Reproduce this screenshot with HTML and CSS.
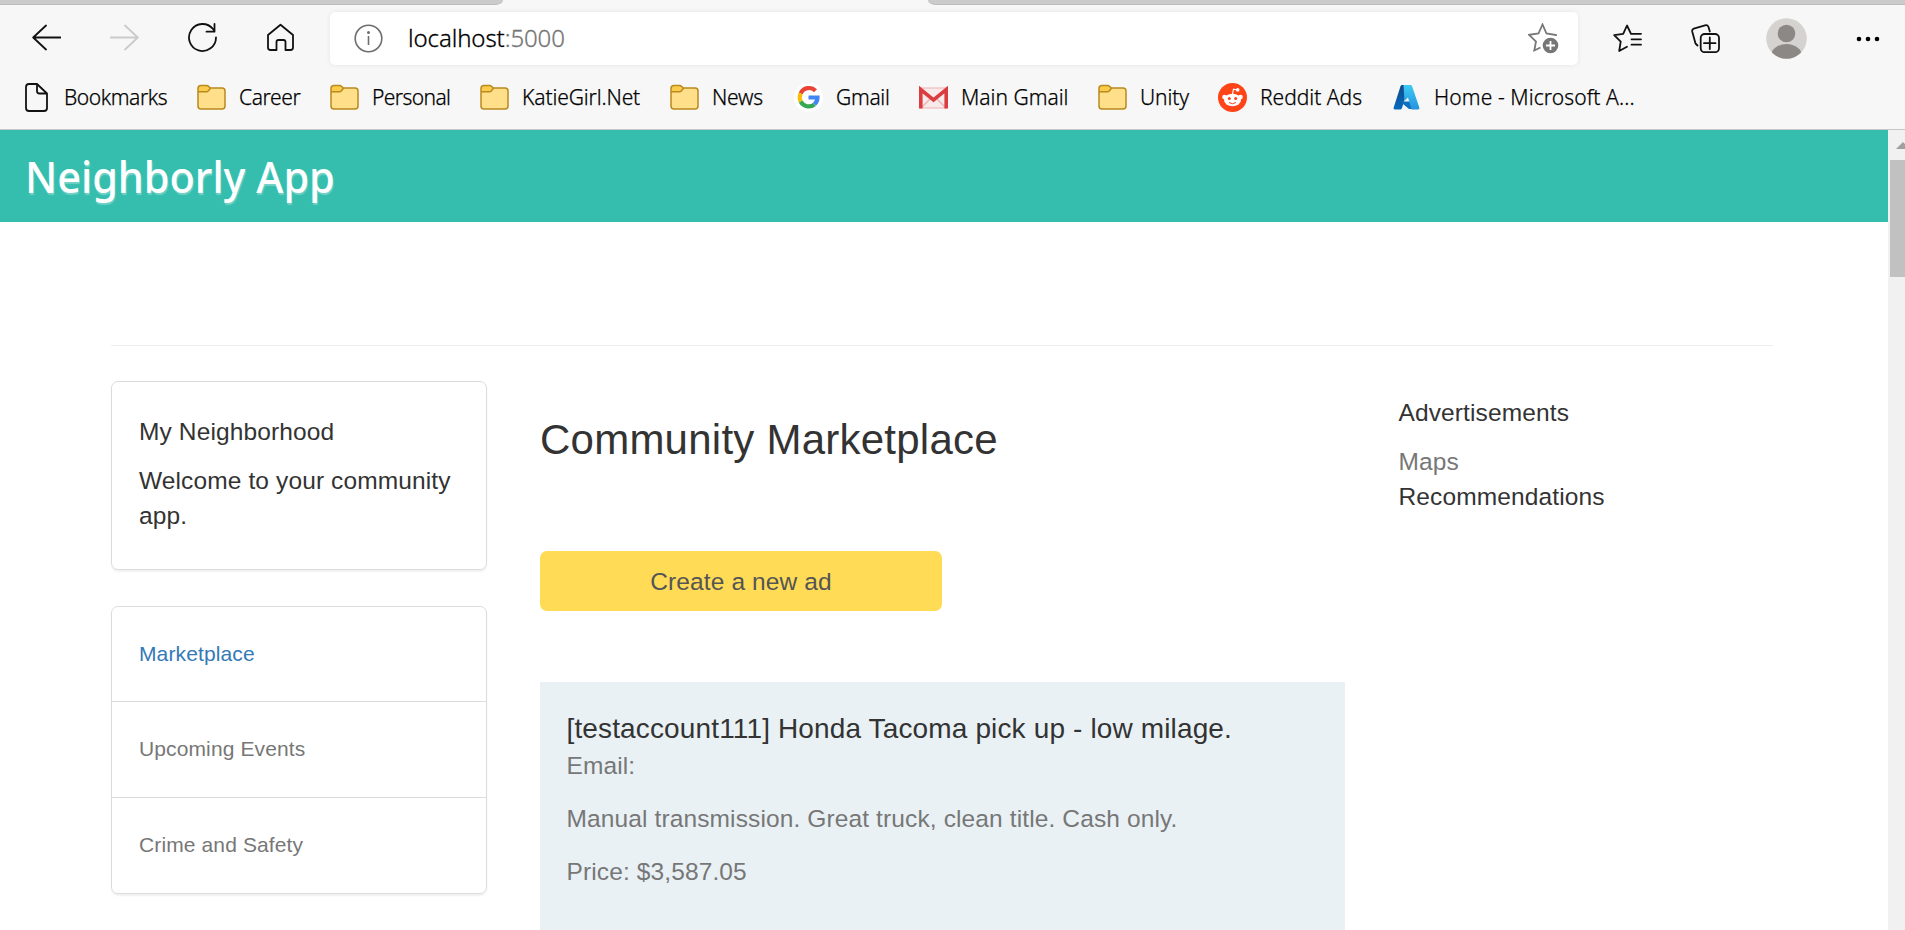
FILE: index.html
```
<!DOCTYPE html>
<html lang="en">
<head>
<meta charset="utf-8">
<title>Neighborly App</title>
<link rel="stylesheet" href="styles.css">
</head>
<body>
<svg class="defs" width="0" height="0">
  <symbol id="folder" viewBox="0 0 29 26">
    <path d="M1 5 V21.500 Q1 24.500 4 24.500 H25 Q28 24.500 28 21.500 V6.500 Q28 3.500 25 3.500 H13.500 L11 1 H4 Q1 1 1 4 Z" fill="#ffdf8a"/>
    <path d="M1 5.500 V4 Q1 1 4 1 H10.500 L13.500 4 L10.500 7.300 H2.500 Q1 7.300 1 5.500 Z" fill="#fbcb4c"/>
    <path d="M1 5 V21.500 Q1 24.500 4 24.500 H25 Q28 24.500 28 21.500 V6.500 Q28 3.500 25 3.500 H13.200 L11.500 1.800 Q10.800 1 9.500 1 H4 Q1 1 1 4 Z M1.500 7.300 H9.500 Q10.500 7.300 11.200 6.500 L13.500 3.800" fill="none" stroke="#b98a1e" stroke-width="1.500"/>
  </symbol>
</svg>
<div class="browser">
  <div class="tabs"><span class="tab-left"></span><span class="tab-active"></span><span class="tab-right"></span></div>
  <div class="toolbar">
    <div class="nav">
      <svg viewBox="0 0 29 29"><path d="M28.500 14.500H1.200M14 2.500 1.200 14.500 14 26.500" class="ln"/></svg>
      <svg viewBox="0 0 29 29"><path d="M.5 14.500H27.800M15 2.500 27.800 14.500 15 26.500" class="ln dim"/></svg>
      <svg viewBox="0 0 29 29"><path d="M28 14.500a13.500 13.500 0 1 1-3-8.500l1.500 2M18.500 8.700h8V1" class="ln"/></svg>
      <svg viewBox="0 0 29 29"><path d="M2 12 14.500 1.700 27 12V24.500q0 2.500-2.500 2.500H19.500V19q0-2-2-2H12.500q-2 0-2 2V27H4.500Q2 27 2 24.500Z" class="ln"/></svg>
    </div>
    <div class="omnibox">
      <svg class="info" viewBox="0 0 29 29"><circle cx="14.500" cy="14.500" r="13.300"/><path d="M14.500 12v9"/><circle cx="14.500" cy="8.500" r=".7"/></svg>
      <span class="url">localhost<span class="port">:5000</span></span>
      <svg class="fav" viewBox="0 0 31 31"><path d="M28 13V12L18.500 10.500 14.500 1.500 10.500 10.500 1 11.800 8 18.500 6.300 27.500 12.500 24.500"/><circle cx="22.500" cy="22.500" r="7.800"/><path class="plus" d="M22.500 18v9M18 22.500h9"/></svg>
    </div>
    <div class="tools">
      <svg class="t1" viewBox="0 0 29 29"><path d="M28 9.800H18L14 1.500 10.200 9.800 1.200 11.200 7.700 17.700 6.200 27 14 22.700M18.500 15.300H28M18.500 20.700H28" class="ln"/></svg>
      <svg class="t2" viewBox="0 0 29 29"><path d="M6.500 21.500 4.500 19.500 1.200 7.500Q.8 5.500 2.800 4.700L14 1.300Q16.500.5 17.500 3L18.800 7.500" class="ln"/><rect x="9.700" y="10" width="18.300" height="18.200" rx="4" class="ln"/><path d="M18.800 13.500v11.500M13 19.200h11.500" class="ln"/></svg>
      <svg class="t3" viewBox="0 0 41 41"><defs><clipPath id="av"><circle cx="20.500" cy="20.500" r="20.300"/></clipPath></defs><circle cx="20.500" cy="20.500" r="20.300" fill="#d5d3d0"/><g clip-path="url(#av)" fill="#8b8886"><circle cx="20.500" cy="15.500" r="8.800"/><ellipse cx="20.500" cy="38" rx="15.500" ry="12"/></g></svg>
      <svg class="t4" viewBox="0 0 24 6"><circle cx="3" cy="3" r="2.300"/><circle cx="12" cy="3" r="2.300"/><circle cx="21" cy="3" r="2.300"/></svg>
    </div>
  </div>
  <div class="bookmarks">
    <div class="bm b1"><svg viewBox="0 0 29 29"><path d="M7 1H15L25 10.500V25q0 3-3 3H7q-3 0-3-3V4q0-3 3-3ZM15 1V8q0 2.500 2.500 2.500H25" class="ln"/></svg><span>Bookmarks</span></div>
    <div class="bm b2"><svg><use href="#folder"/></svg><span>Career</span></div>
    <div class="bm b3"><svg><use href="#folder"/></svg><span>Personal</span></div>
    <div class="bm b4"><svg><use href="#folder"/></svg><span>KatieGirl.Net</span></div>
    <div class="bm b5"><svg><use href="#folder"/></svg><span>News</span></div>
    <div class="bm b6"><svg viewBox="0 0 29 29"><circle cx="14.500" cy="14.500" r="14.500" fill="#fff"/><g fill="none" stroke-width="4.200"><path d="M21.500 7.800A9 9 0 0 0 6.700 10.500" stroke="#ea4335"/><path d="M6.700 10.500A9 9 0 0 0 6.700 18.500" stroke="#fbbc05"/><path d="M6.700 18.500A9 9 0 0 0 20.500 21.300" stroke="#34a853"/><path d="M20.500 21.300Q23.500 18.500 23.500 14.500H14.500" stroke="#4285f4"/></g></svg><span>Gmail</span></div>
    <div class="bm b7"><svg viewBox="0 0 29 29"><path d="M1 5H28V25H1Z" fill="#f6eaea" stroke="#efb0b0"/><path d="M3 24 12 15M26 24 17 15" stroke="#eeb5b5" stroke-width="1.500"/><path d="M1.800 25.500V6.500L14.500 17 27.200 6.500V25.500" fill="none" stroke="#db3c3f" stroke-width="3.600"/></svg><span>Main Gmail</span></div>
    <div class="bm b8"><svg><use href="#folder"/></svg><span>Unity</span></div>
    <div class="bm b9"><svg viewBox="0 0 29 29"><circle cx="14.500" cy="14.500" r="14.500" fill="#ff4418"/><g fill="#fff"><ellipse cx="14.500" cy="17" rx="8.500" ry="6.200"/><circle cx="6.500" cy="14" r="2.300"/><circle cx="22.500" cy="14" r="2.300"/><circle cx="19.700" cy="6.900" r="1.800"/></g><path d="M14.500 11 15.500 6.200 19.500 7" stroke="#fff" stroke-width="1.200" fill="none"/><circle cx="11.300" cy="15.500" r="1.500" fill="#ff4418"/><circle cx="17.700" cy="15.500" r="1.500" fill="#ff4418"/><path d="M11 19.500q3.500 2.500 7 0" stroke="#ff4418" fill="none"/></svg><span>Reddit Ads</span></div>
    <div class="bm b10"><svg viewBox="0 0 29 29"><defs><linearGradient id="az1" x1="0" y1="0" x2="0" y2="1"><stop offset="0" stop-color="#114a8b"/><stop offset="1" stop-color="#0669bc"/></linearGradient><linearGradient id="az2" x1="0" y1="0" x2="0" y2="1"><stop offset="0" stop-color="#3ccbf4"/><stop offset="1" stop-color="#2892df"/></linearGradient></defs><path d="M10 2H17L10 25Q9.500 26.500 8 26.500H3Q1 26.500 1.700 24.500L8.600 3Q9 2 10 2Z" fill="url(#az1)"/><path d="M8 18.500H19L21 26H17Z" fill="#0f6fc0"/><path d="M11.500 2H18.500Q19.700 2 20 3L27.300 24.500Q28 26.500 26 26.500H19.500L16 14.500 12.500 18Z" fill="url(#az2)"/></svg><span>Home - Microsoft A...</span></div>
  </div>
</div>
<div class="viewport">
  <div class="page">
    <header class="brand"><span>Neighborly App</span></header>
    <hr class="rule">
    <main class="cols">
      <aside class="side">
        <section class="card intro"><h4>My Neighborhood</h4><p>Welcome to your community app.</p></section>
        <nav class="card menu"><a class="on">Marketplace</a><a>Upcoming Events</a><a>Crime and Safety</a></nav>
      </aside>
      <section class="main">
        <h2>Community Marketplace</h2>
        <a class="btn">Create a new ad</a>
        <article class="post">
          <h3>[testaccount111] Honda Tacoma pick up - low milage.</h3>
          <p>Email:</p>
          <p class="gap">Manual transmission. Great truck, clean title. Cash only.</p>
          <p class="gap">Price: $3,587.05</p>
        </article>
      </section>
      <aside class="ads"><h4>Advertisements</h4><p>Maps</p><p class="dark">Recommendations</p></aside>
    </main>
  </div>
  <div class="scrollbar"><span class="arrow"></span><span class="thumb"></span></div>
</div>
</body>
</html>
```
FILE: styles.css
```
* { box-sizing: border-box; }
body { margin: 0; height: 930px; overflow: hidden; display: flex; flex-direction: column; background: #fff; font-family: "Liberation Sans", Arial, sans-serif; }
h2, h3, h4, p { margin: 0; font-weight: 400; }
.defs { position: absolute; }
.ln { fill: none; stroke: #111; stroke-width: 1.8; stroke-linejoin: round; stroke-linecap: round; }
.dim { stroke: #cbcbcb; }
.browser { height: 130px; flex: none; background: #f7f7f7; border-bottom: 1px solid #c6c6c6; font-family: "Noto Sans", "Open Sans", sans-serif; color: #000; }
.tabs { height: 5px; display: flex; }
.tab-left { width: 503px; background: #cbcbcb; border-bottom: 1px solid #bcbcbc; border-bottom-right-radius: 8px 5px; }
.tab-active { width: 425px; }
.tab-right { flex: 1; background: #cbcbcb; border-bottom: 1px solid #bcbcbc; border-bottom-left-radius: 8px 5px; }
.toolbar { height: 67px; display: flex; align-items: center; padding: 0 0 0 32px; }
.nav { display: flex; gap: 49px; width: 298px; margin-top: -2px; }
.nav svg { width: 29px; height: 29px; }
.omnibox { width: 1248px; height: 53px; background: #fff; border-radius: 5px; box-shadow: 0 0 5px rgba(0,0,0,.08); display: flex; align-items: center; padding: 0 19px 0 24px; }
.info { width: 29px; height: 29px; fill: none; stroke: #6e6e6e; stroke-width: 1.6; }
.url { font-size: 24px; font-weight: 300; -webkit-text-stroke: .3px; letter-spacing: -.1px; margin: -2px 0 0 25px; flex: 1; }
.port { color: #767676; }
.fav { width: 31px; height: 31px; fill: none; stroke: #777; stroke-width: 1.8; }
.fav circle { fill: #767676; stroke: none; }
.fav .plus { stroke: #fff; }
.tools { display: flex; align-items: center; }
.t1 { width: 29px; margin-left: 35px; }
.t2 { width: 29px; margin-left: 49px; }
.t3 { width: 41px; margin-left: 46px; }
.t4 { width: 24px; margin-left: 49px; }
.bookmarks { display: flex; height: 50px; align-items: center; padding-left: 22px; }
.bm { display: flex; align-items: center; flex: none; font-size: 21px; font-weight: 300; -webkit-text-stroke: .25px; line-height: 30px; white-space: nowrap; }
.bm svg { width: 29px; height: 29px; margin-right: 13px; flex: none; }
.b1 { width: 175px; letter-spacing: -.42px; }
.b2 { width: 133px; letter-spacing: -.4px; }
.b3 { width: 150px; letter-spacing: -.6px; }
.b4 { width: 190px; letter-spacing: -.12px; }
.b5 { width: 124px; letter-spacing: -.25px; }
.b6 { width: 125px; letter-spacing: -.3px; }
.b7 { width: 179px; letter-spacing: 0; }
.b8 { width: 120px; letter-spacing: -.1px; }
.b9 { width: 174px; letter-spacing: 0; }
.b10 { letter-spacing: .1px; }
.viewport { flex: 1; display: flex; min-height: 0; }
.page { width: 1888px; overflow: hidden; }
.brand { height: 92px; background: #35beae; color: #fff; font: 500 44px/60px "Noto Sans", sans-serif; padding: 16px 26px 16px 25px; text-shadow: 1px 2px 1px rgba(255,255,255,.3); }
.brand span { display: inline-block; transform: scaleX(.942); transform-origin: left; }
.rule { border: 0; border-top: 1px solid #eee; height: 0; margin: 123px 115px 0 111px; }
.cols { display: flex; padding: 35px 0 0 111px; font-size: 24.5px; line-height: 35px; letter-spacing: .12px; color: #333; }
.side { width: 376px; }
.card { border: 1px solid #dcdcdc; border-radius: 7px; box-shadow: 0 2px 2px rgba(0,0,0,.06); }
.intro { height: 189px; padding: 32px 20px 0 27px; }
.intro h4 { margin-bottom: 14px; }
.menu { margin-top: 36px; height: 288px; font-size: 21px; line-height: 30px; color: #777; }
.menu a { display: block; height: 96px; padding: 32px 27px 0; border-bottom: 1px solid #dcdcdc; }
.menu a:first-child { height: 95px; }
.menu a:last-child { border: 0; }
.menu .on { color: #337ab7; }
.main { width: 805px; margin-left: 53px; }
.main h2 { font-size: 42px; line-height: 50px; margin-top: 34px; letter-spacing: .24px; }
.btn { display: block; width: 402px; height: 60px; margin-top: 86px; background: #ffdb56; border-radius: 7px; text-align: center; line-height: 61px; color: #555; }
.post { margin-top: 71px; background: #e9f1f5; height: 300px; padding: 28px 26.5px; color: #777; }
.post h3 { font-size: 28px; line-height: 38px; color: #333; letter-spacing: .14px; }
.gap { margin-top: 18px; }
.ads { margin-left: 53.5px; padding-top: 14px; color: #777; }
.ads h4 { color: #333; margin-bottom: 14px; }
.dark { color: #333; }
.scrollbar { flex: 1; background: #f1f1f1; padding-left: 2px; overflow: hidden; }
.arrow { display: block; width: 0; margin: 12px 0 11px 6px; border: 7px solid transparent; border-top: 0; border-bottom-color: #a0a0a0; }
.thumb { display: block; height: 117px; background: #c1c1c1; }
```
